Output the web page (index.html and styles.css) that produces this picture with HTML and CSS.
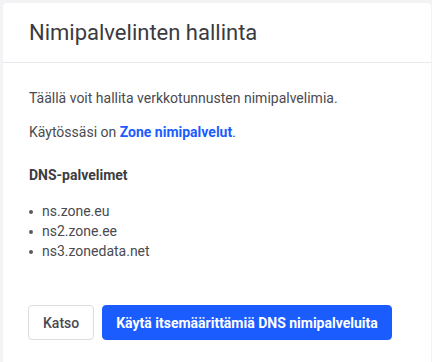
FILE: index.html
```html
<!DOCTYPE html>
<html lang="fi">
<head>
<meta charset="utf-8">
<link rel="stylesheet" href="styles.css">
</head>
<body>
<div class="card">
  <div class="card-header">
    <h1 class="title">Nimipalvelinten hallinta</h1>
  </div>
  <div class="card-body">
    <p class="text">Täällä voit hallita verkkotunnusten nimipalvelimia.</p>
    <p class="text">Käytössäsi on <a class="link" href="#">Zone nimipalvelut</a>.</p>
    <h2 class="subtitle">DNS-palvelimet</h2>
    <ul class="ns-list">
      <li class="ns-item">ns.zone.eu</li>
      <li class="ns-item">ns2.zone.ee</li>
      <li class="ns-item">ns3.zonedata.net</li>
    </ul>
    <div class="actions">
      <button class="btn btn-secondary">Katso</button>
      <button class="btn btn-primary">Käytä itsemäärittämiä DNS nimipalveluita</button>
    </div>
  </div>
</div>
</body>
</html>
```
FILE: styles.css
```css
html, body {
  margin: 0;
  padding: 0;
}
body {
  background: #f3f3f6;
  font-family: Roboto, "Liberation Sans", sans-serif;
  color: #4a4a4f;
  padding: 3px 1px 0 3px;
  height: 362px;
  box-sizing: border-box;
  overflow: hidden;
}
.card {
  background: #ffffff;
  border-radius: 4px;
  height: 420px;
}
.card-header {
  padding: 17px 26px;
  border-bottom: 1px solid #e9e9ef;
}
.title {
  margin: 0;
  font-size: 22px;
  line-height: 25px;
  font-weight: 400;
  color: #3a3a3f;
}
.card-body {
  padding: 25px 26px 0 26px;
}
.text {
  margin: 0 0 14px 0;
  font-size: 14px;
  line-height: 20px;
}
.link {
  color: #1b5cff;
  font-weight: 700;
  text-decoration: none;
}
.subtitle {
  margin: 23px 0 16px 0;
  font-size: 14px;
  line-height: 20px;
  font-weight: 700;
  color: #3c3c41;
}
.ns-list {
  list-style: none;
  margin: 0;
  padding: 0;
}
.ns-item {
  font-size: 14px;
  line-height: 20px;
  display: flex;
  align-items: center;
  gap: 9px;
}
.ns-item::before {
  content: "";
  width: 4px;
  height: 4px;
  border-radius: 50%;
  background: #5a5a60;
  margin-top: 1px;
}
.actions {
  display: flex;
  gap: 8px;
  margin-top: 44px;
  margin-left: -1px;
}
.btn {
  font-family: Roboto, "Liberation Sans", sans-serif;
  font-size: 14px;
  height: 35px;
  border-radius: 4px;
  cursor: pointer;
}
.btn-secondary {
  background: #ffffff;
  border: 1px solid #dcdce2;
  color: #4a4a4f;
  font-weight: 500;
  padding: 0 14px;
}
.btn-primary {
  background: #1b5cff;
  border: 1px solid #1b5cff;
  color: #ffffff;
  font-weight: 700;
  padding: 0 13px;
}
```
